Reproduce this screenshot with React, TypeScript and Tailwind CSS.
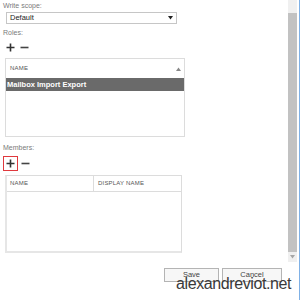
import React from "react";

function Plus({ size = 9 }: { size?: number }) {
  return (
    <svg width={size} height={size} viewBox="0 0 9 9">
      <path d="M4.5 0.5v8M0.5 4.5h8" stroke="#333" strokeWidth="1.6" />
    </svg>
  );
}

function Minus() {
  return (
    <svg width="9" height="9" viewBox="0 0 9 9">
      <path d="M0.5 4.5h8" stroke="#444" strokeWidth="1.6" />
    </svg>
  );
}

function Tri({ up = false, color = "#222" }: { up?: boolean; color?: string }) {
  return (
    <svg width="5" height="4" viewBox="0 0 5 4">
      <path d={up ? "M0 4L2.5 0.5L5 4Z" : "M0 0L5 0L2.5 3.5Z"} fill={color} />
    </svg>
  );
}

export default function App() {
  return (
    <div className="relative flex h-[300px] w-[300px] overflow-hidden bg-white font-['Liberation_Sans',Arial,sans-serif]">
      {/* Main form */}
      <div className="w-[288px]">
        <div className="ml-[3px] pt-[2px] text-[7px] leading-[8px] text-[#7a7a7a]">Write scope:</div>
        <div className="ml-[6px] mt-[2px] flex h-[12px] w-[171px] items-center justify-between border border-[#c6c6c6] pl-[3px] pr-[3px] text-[7.5px] leading-none text-[#222]">
          <span>Default</span>
          <Tri />
        </div>

        <div className="ml-[3px] mt-[5px] text-[7px] leading-[8px] text-[#7a7a7a]">Roles:</div>
        <div className="ml-[6px] mt-[5px] flex h-[10px] items-center gap-[5px]">
          <Plus />
          <Minus />
        </div>

        {/* Roles table */}
        <div className="ml-[5px] mt-[6px] h-[79px] w-[180px] border border-[#dcdcdc]">
          <div className="flex h-[19px] items-center justify-between pl-[4px] pr-[3px] text-[6px] tracking-[0.2px] text-[#555]">
            <span>NAME</span>
            <Tri up color="#888" />
          </div>
          <div className="flex h-[13px] items-center bg-[#6a6a6a] pl-[1px] text-[7.5px] font-bold leading-none text-white">
            Mailbox Import Export
          </div>
        </div>

        <div className="ml-[3px] mt-[7px] text-[7px] leading-[8px] text-[#7a7a7a]">Members:</div>
        <div className="ml-[3px] mt-[4px] flex items-center gap-[3px]">
          <div className="flex h-[15px] w-[15px] items-center justify-center border-[1.5px] border-[#e0393e]">
            <Plus />
          </div>
          <Minus />
        </div>

        {/* Members table */}
        <div className="ml-[5px] mt-[4px] h-[78px] w-[177px] border border-[#dcdcdc] border-b-2 border-l-2 border-b-[#e6e6e6] border-l-[#e6e6e6]">
          <div className="flex h-[16px] border-b border-[#dcdcdc] text-[6px] tracking-[0.2px] text-[#555]">
            <div className="flex w-[87px] items-center border-r border-[#dcdcdc] pl-[3px]">NAME</div>
            <div className="flex items-center pl-[4px]">DISPLAY NAME</div>
          </div>
        </div>

        {/* Buttons */}
        <div className="ml-[164px] mt-[15px] flex gap-[3px]">
          <button className="h-[14px] w-[55px] border border-[#b4b4b4] bg-[#f7f7f7] text-[7.5px] leading-none text-[#444]">Save</button>
          <button className="h-[14px] w-[60px] border border-[#b4b4b4] bg-[#f7f7f7] text-[7.5px] leading-none text-[#444]">Cancel</button>
        </div>
      </div>

      {/* Scrollbar */}
      <div className="flex w-[9px] flex-col">
        <div className="h-[13px] bg-[#f0f0f0]" />
        <div className="h-[239px] bg-[#c2c2c2]" />
        <div className="flex h-[10px] items-center justify-center bg-[#f0f0f0]">
          <Tri color="#a6a6a6" />
        </div>
      </div>
      <div className="w-[2px]" />
      <div className="w-[1px] bg-[#7fb1e6]" />

      {/* Watermark */}
      <div className="absolute left-[176px] top-[274px] text-[16px] leading-[20px] tracking-[-0.4px] text-[#3a3a3a]">
        alexandreviot.net
      </div>
    </div>
  );
}
